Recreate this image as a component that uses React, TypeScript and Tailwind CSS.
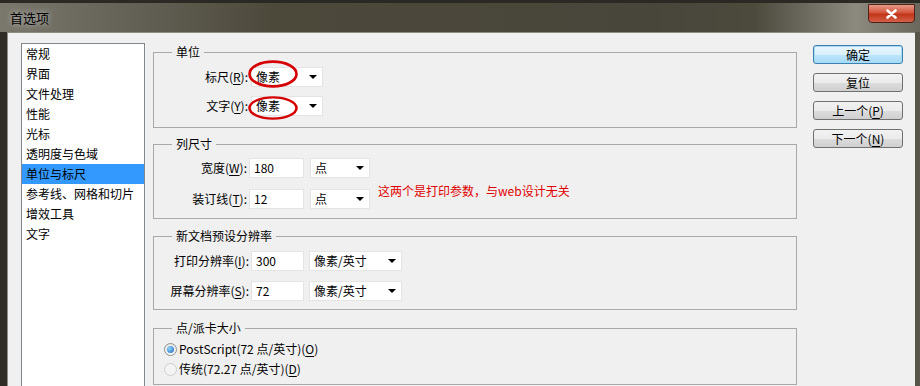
import React from 'react';

const listItems = ['常规', '界面', '文件处理', '性能', '光标', '透明度与色域', '单位与标尺', '参考线、网格和切片', '增效工具', '文字'];

const Mn = ({ c }: { c: string }) => <span className="underline underline-offset-2">{c}</span>;

const Arrow = () => (
  <span className="ml-auto mr-[5px] w-0 h-0 border-x-[4px] border-x-transparent border-t-[4px] border-t-black" />
);

const Select = ({ className, text }: { className: string; text: string }) => (
  <div className={`${className} h-[20px] bg-white border border-[#e4e4e4] flex items-center pl-[4px]`}>
    <span>{text}</span>
    <Arrow />
  </div>
);

const Input = ({ className, value }: { className: string; value: string }) => (
  <div className={`${className} h-[20px] bg-white border border-[#e4e4e4] flex items-center pl-[4px]`}>{value}</div>
);

const Ellipse = ({ className }: { className: string }) => (
  <svg className={`absolute pointer-events-none ${className}`} viewBox="0 0 50 26" preserveAspectRatio="none">
    <ellipse cx="25" cy="13" rx="23.5" ry="11.5" fill="none" stroke="#d60000" strokeWidth="2.6" />
  </svg>
);

const Button = ({ children, primary }: { children: React.ReactNode; primary?: boolean }) => (
  <button
    className={`w-[90px] h-[19px] rounded-[3px] border text-[12px] leading-none flex items-center justify-center text-black ${
      primary
        ? 'border-[#3c7fb1] bg-[linear-gradient(#eaf6fd,#d9f0fc_50%,#bee6fd_51%,#a7d9f5)] shadow-[0_0_0_1px_#a6dcf7_inset]'
        : 'border-[#707070] bg-[linear-gradient(#f2f2f2,#ebebeb_50%,#dddddd_51%,#cfcfcf)]'
    }`}
  >
    {children}
  </button>
);

export default function App() {
  return (
    <div className="w-[920px] h-[386px] overflow-hidden flex flex-col bg-[#3a382f] text-[12px] leading-[16px] text-black font-['Noto_Sans_CJK_SC','Microsoft_YaHei',sans-serif]">
      {/* title bar */}
      <div className="relative h-[32px] shrink-0 border-t-[3px] border-t-[#2a2923] bg-[linear-gradient(90deg,#7a776d_0%,#67645a_12%,#4c493b_30%,#48453a_70%,#4c493d_82%,#8c897f_93%,#6a675d_100%)] flex items-center pl-[10px]">
        <span className="text-[13px] text-black [text-shadow:0_0_6px_rgba(255,255,255,0.7)]">首选项</span>
        <div className="absolute right-[5px] top-[1px] w-[47px] h-[19px] rounded-b-[4px] border border-[#4d2219] bg-[linear-gradient(#e49a88,#d4553c_45%,#c23519_55%,#d4614a)] flex items-center justify-center">
          <svg width="11" height="10" viewBox="0 0 11 10">
            <path d="M1.5 1.5 L9.5 8.5 M9.5 1.5 L1.5 8.5" stroke="white" strokeWidth="2.6" strokeLinecap="round" />
          </svg>
        </div>
      </div>

      <div className="flex flex-1 min-h-0 pl-[7px] pr-[5px] bg-[linear-gradient(90deg,#2f2d26,#57544a)]">
        <div className="flex-1 bg-[#f0f0f0] flex items-start pl-[13px] pt-[11px] border-t border-l border-[#8f8c84]">
          {/* category list */}
          <div className="w-[124px] h-[360px] -mt-[1px] bg-white border border-[#828790] shrink-0">
            {listItems.map((item) => (
              <div
                key={item}
                className={`h-[20px] leading-[20px] pl-[4px] ${item === '单位与标尺' ? 'bg-[#3399ff]' : ''}`}
              >
                {item}
              </div>
            ))}
          </div>

          {/* groups */}
          <div className="ml-[8px] w-[644px] flex flex-col shrink-0">
            <fieldset className="h-[84px] border border-[#a9a9a9]">
              <legend className="ml-[18px] px-[4px]">单位</legend>
              <div className="flex items-center mt-[7px]">
                <span className="w-[94px] text-right">标尺(<Mn c="R" />):</span>
                <div className="relative ml-[3px]">
                  <Select className="w-[72px]" text="像素" />
                  <Ellipse className="-left-[3px] -top-[7px] w-[50px] h-[28px]" />
                </div>
              </div>
              <div className="flex items-center mt-[9px]">
                <span className="w-[94px] text-right">文字(<Mn c="Y" />):</span>
                <div className="relative ml-[3px]">
                  <Select className="w-[72px]" text="像素" />
                  <Ellipse className="-left-[3px] top-0 w-[50px] h-[24px]" />
                </div>
              </div>
            </fieldset>

            <fieldset className="h-[83px] mt-[8px] border border-[#a9a9a9]">
              <legend className="ml-[18px] px-[4px]">列尺寸</legend>
              <div className="flex items-center mt-[6px]">
                <span className="w-[93px] text-right">宽度(<Mn c="W" />):</span>
                <Input className="ml-[2px] w-[55px]" value="180" />
                <Select className="ml-[6px] w-[60px]" text="点" />
              </div>
              <div className="flex items-start mt-[11px]">
                <span className="w-[93px] text-right leading-[20px]">装订线(<Mn c="T" />):</span>
                <Input className="ml-[2px] w-[55px]" value="12" />
                <Select className="ml-[6px] w-[60px]" text="点" />
                <span className="ml-[8px] -mt-[6px] text-[#e00000]">这两个是打印参数，与web设计无关</span>
              </div>
            </fieldset>

            <fieldset className="h-[82px] mt-[9px] border border-[#a9a9a9]">
              <legend className="ml-[18px] px-[4px]">新文档预设分辨率</legend>
              <div className="flex items-center mt-[7px]">
                <span className="w-[95px] text-right">打印分辨率(<Mn c="I" />):</span>
                <Input className="ml-[2px] w-[53px]" value="300" />
                <Select className="ml-[5px] w-[93px]" text="像素/英寸" />
              </div>
              <div className="flex items-center mt-[10px]">
                <span className="w-[95px] text-right">屏幕分辨率(<Mn c="S" />):</span>
                <Input className="ml-[2px] w-[53px]" value="72" />
                <Select className="ml-[5px] w-[93px]" text="像素/英寸" />
              </div>
            </fieldset>

            <fieldset className="h-[65px] mt-[10px] border border-[#a9a9a9]">
              <legend className="ml-[18px] px-[4px]">点/派卡大小</legend>
              <div className="flex items-center mt-[5px] pl-[10px] h-[16px]">
                <span className="w-[13px] h-[13px] rounded-full border border-[#8e8f8f] bg-[linear-gradient(#e8e8e8,#fafafa)] flex items-center justify-center">
                  <span className="w-[7px] h-[7px] rounded-full bg-[radial-gradient(circle_at_35%_35%,#8fd4ff,#1c68b8)]" />
                </span>
                <span className="ml-[2px]">PostScript(72 点/英寸)(<Mn c="O" />)</span>
              </div>
              <div className="flex items-center mt-[4px] pl-[10px] h-[16px]">
                <span className="w-[13px] h-[13px] rounded-full border border-[#cfcfcf] bg-[#f4f4f4]" />
                <span className="ml-[2px]">传统(72.27 点/英寸)(<Mn c="D" />)</span>
              </div>
            </fieldset>
          </div>

          {/* buttons */}
          <div className="ml-[16px] mt-[1px] flex flex-col gap-[9px]">
            <Button primary>确定</Button>
            <Button>复位</Button>
            <Button>上一个(<Mn c="P" />)</Button>
            <Button>下一个(<Mn c="N" />)</Button>
          </div>
        </div>
      </div>
    </div>
  );
}
